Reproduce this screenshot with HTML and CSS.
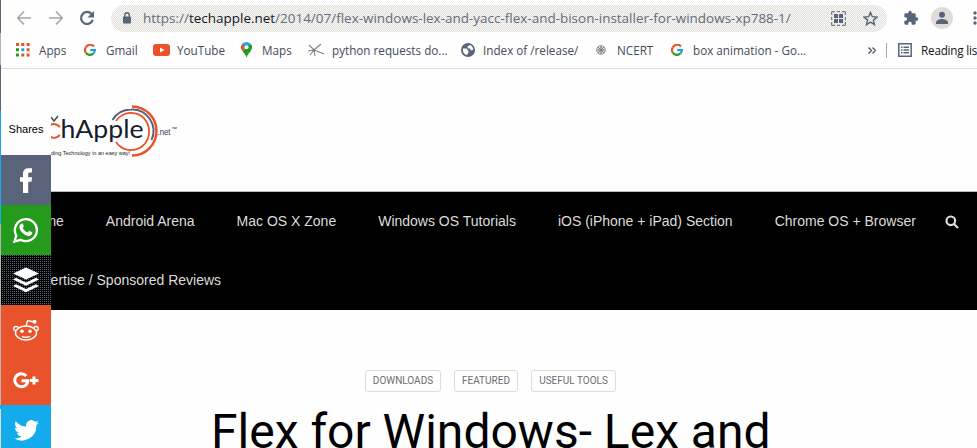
FILE: index.html
```html
<!DOCTYPE html>
<html lang="en">
<head>
<meta charset="utf-8">
<title>Flex for Windows</title>
<link rel="stylesheet" href="styles.css">
</head>
<body>
<div class="browser">
  <div class="toolbar">
    <svg class="back" width="16" height="16" viewBox="0 0 16 16" fill="none" stroke="#aaa6a2" stroke-width="1.6"><path d="M15 8H2M8 1.500 1.800 8 8 14.500"/></svg>
    <svg class="forward" width="16" height="16" viewBox="0 0 16 16" fill="none" stroke="#aaa6a2" stroke-width="1.6"><path d="M1 8h13M8 1.500 14.200 8 8 14.500"/></svg>
    <svg class="reload" width="16" height="16" viewBox="0 0 16 16"><path d="M12.600 4A6 6 0 1 0 13.800 9.800" fill="none" stroke="#59637a" stroke-width="2.200"/><path d="M15 1v6.500H8.500z" fill="#59637a"/></svg>
    <div class="address">
      <svg class="lock" width="10" height="12" viewBox="0 0 10 12"><rect x="1" y="4.500" width="8" height="7" rx=".8" fill="#59637a"/><path d="M2.800 5V3a2.200 2.200 0 0 1 4.400 0v2" fill="none" stroke="#59637a" stroke-width="1.400"/></svg>
      <span class="url">https://<b>techapple.net</b>/2014/07/flex-windows-lex-and-yacc-flex-and-bison-installer-for-windows-xp788-1/</span>
      <svg class="qr" width="15" height="15" viewBox="0 0 15 15" fill="#59637a"><path d="M3 3h4v4H3zM8 3h4v4H8zM3 8h4v4H3zM8 8h4v4H8z"/><path d="M.7 4V.7H4M11 .7h3.300V4M.7 11v3.300H4M11 14.300h3.300V11M6 .7h3M6 14.300h3M.7 6v3M14.300 6v3" fill="none" stroke="#59637a" stroke-width="1"/></svg>
      <svg class="star" width="15" height="15" viewBox="0 0 15 15" fill="none" stroke="#59637a" stroke-width="1.400"><path d="m7.500 1.400 1.800 4.300 4.700.4-3.600 3 1.100 4.600-4-2.500-4 2.500 1.100-4.600L1 6.100l4.700-.4z"/></svg>
    </div>
    <svg class="puzzle" width="16" height="16" viewBox="0 0 24 24" fill="#59637a"><path d="M20.500 11H19V7c0-1.100-.9-2-2-2h-4V3.500a2.500 2.500 0 0 0-5 0V5H4c-1.100 0-2 .9-2 2v3.800h1.500a2.700 2.700 0 0 1 0 5.400H2V20c0 1.100.9 2 2 2h3.800v-1.500a2.700 2.700 0 0 1 5.400 0V22H17c1.100 0 2-.9 2-2v-4h1.500a2.500 2.500 0 0 0 0-5z"/></svg>
    <svg class="avatar" width="22" height="22" viewBox="0 0 22 22"><circle cx="11" cy="11" r="11" fill="#deddd8"/><g fill="#59637a"><circle cx="11" cy="7.800" r="3"/><path d="M5 17v-1.500c0-2.300 3.500-3.600 6-3.600s6 1.300 6 3.600V17z"/></g></svg>
    <svg class="more" width="4" height="14" viewBox="0 0 4 14" fill="#59637a"><circle cx="2" cy="2" r="1.700"/><circle cx="2" cy="7" r="1.700"/><circle cx="2" cy="12" r="1.700"/></svg>
  </div>
  <div class="bookmarks">
    <div class="bm apps"><svg width="14" height="14" viewBox="0 0 14 14"><path d="M0 0h3v3H0zM5.300 0h3v3h-3zM10.600 0h3v3h-3zM10.600 5.300h3v3h-3zM5.300 10.600h3v3h-3z" fill="#e9532b"/><path d="M0 5.300h3v3H0zM0 10.600h3v3H0z" fill="#249b1c"/><path d="M5.300 5.300h3v3h-3z" fill="#13abec"/><path d="M10.600 10.600h3v3h-3z" fill="#e9532b"/></svg><span>Apps</span></div>
    <div class="bm gmail"><svg width="12" height="12" viewBox="0 0 12 12" fill="none" stroke-width="2.200"><path d="M10 2.500A5 5 0 0 0 1.700 3.500" stroke="#e9532b"/><path d="M1.700 3.500a5 5 0 0 0 0 5" stroke="#e9532b"/><path d="M1.700 8.500a5 5 0 0 0 7.700 1" stroke="#249b1c"/><path d="M9.400 9.500A5 5 0 0 0 10.900 6H6.200" stroke="#1b9dde"/></svg><span>Gmail</span></div>
    <div class="bm youtube"><svg width="17" height="12" viewBox="0 0 17 12"><rect width="17" height="12" rx="3" fill="#e9532b"/><path d="m7 3.500 4.500 2.500L7 8.500z" fill="#fff"/></svg><span>YouTube</span></div>
    <div class="bm maps"><svg width="11" height="16" viewBox="0 0 11 16"><path d="M5.500 0A5.500 5.500 0 0 0 0 5.500h11A5.500 5.500 0 0 0 5.500 0" fill="#13abec"/><path d="M1.500 2A5.400 5.400 0 0 0 1.400 9L5 5.500z" fill="#e9532b"/><path d="M1.400 9 9.700 2c1.700 2 1.700 4.700 0 7C8 11.500 6.500 12.500 5.500 15.500 4.500 12.500 3 11 1.400 9" fill="#249b1c"/><circle cx="5.500" cy="5.300" r="2" fill="#fff"/></svg><span>Maps</span></div>
    <div class="bm python"><svg width="17" height="14" viewBox="0 0 17 14" fill="none" stroke="#817f7e" stroke-width="1.100"><path d="m1 2 5 5 7-6M0 8l6-1-4 5M6 7l1 6M6 7l10 4"/><circle cx="6" cy="7" r="1" fill="#4c8a49" stroke="none"/></svg><span>python requests do...</span></div>
    <div class="bm index"><svg width="14" height="14" viewBox="0 0 14 14"><circle cx="7" cy="7" r="7" fill="#59637a"/><path d="M2 5.500h3.500L7.500 8v1.500L6 12C3 11.500 1.500 8.500 2 5.500M6.500 3.500 9 2c2 .8 3 2.500 3.300 4.500L10 7.500 9 5.500H7z" fill="#fff"/></svg><span>Index of /release/</span></div>
    <div class="bm ncert"><svg width="10" height="10" viewBox="0 0 10 10" fill="none" stroke="#777983" stroke-width=".9"><circle cx="5" cy="5" r="4.300"/><circle cx="5" cy="5" r="2.300"/><path d="M5 1v8M1 5h8M2 2l6 6M8 2 2 8"/></svg><span>NCERT</span></div>
    <div class="bm box"><svg width="12" height="12" viewBox="0 0 12 12" fill="none" stroke-width="2.200"><path d="M10 2.500A5 5 0 0 0 1.700 3.500" stroke="#e9532b"/><path d="M1.700 3.500a5 5 0 0 0 0 5" stroke="#e9532b"/><path d="M1.700 8.500a5 5 0 0 0 7.700 1" stroke="#249b1c"/><path d="M9.400 9.500A5 5 0 0 0 10.900 6H6.200" stroke="#1b9dde"/></svg><span>box animation - Go...</span></div>
    <svg class="chevrons" width="8" height="7" viewBox="0 0 8 7" fill="none" stroke="#59637a" stroke-width="1.500"><path d="m.5.500 3 3-3 3M4.500.500l3 3-3 3"/></svg>
    <div class="reading"><svg width="14" height="14" viewBox="0 0 14 14" fill="none" stroke="#59637a" stroke-width="1.500"><path d="M.8.800h12.400v12.400H.8zM3 4.200h1.500M5.500 4.200H11M3 7h1.500M5.500 7H11M3 9.800h1.500M5.500 9.800H11"/></svg><span>Reading list</span></div>
  </div>
</div>
<header class="site-header">
  <svg class="logo" width="180" height="64" viewBox="0 0 180 64">
    <g fill="none" stroke-width="2">
      <path d="M132 6.500a24.500 24.500 0 0 1 0 49" stroke="#e9532b" stroke-width="2.500"/>
      <path d="M112.500 20A21.500 21.500 0 0 1 131 9.500 21.500 21.500 0 0 1 151.500 40" stroke="#59637a"/>
      <path d="M116 21A18 18 0 0 1 149 31 18 18 0 0 1 116 42" stroke="#e9532b" stroke-width="1.800"/>
      <path d="M60 27c-4-4-9-4-12 0M48 34c3 5 8 5 12 1" stroke="#e9532b"/>
      <path d="m51 17 3 4 4-5" stroke="#43504d" stroke-width="1.500"/>
    </g>
    <text class="logo-name" x="60.500" y="38" textLength="83" lengthAdjust="spacingAndGlyphs">hApple</text>
    <text class="logo-net" x="157.500" y="35" textLength="13" lengthAdjust="spacingAndGlyphs">.net</text>
    <text class="logo-tm" x="171" y="31">™</text>
    <text class="logo-tag" x="51" y="55" textLength="79" lengthAdjust="spacingAndGlyphs">ding Technology in an easy way!</text>
  </svg>
</header>
<nav class="menu">
  <a>Home</a><a>Android Arena</a><a>Mac OS X Zone</a><a>Windows OS Tutorials</a><a>iOS (iPhone + iPad) Section</a><a>Chrome OS + Browser</a>
  <svg class="search" width="14" height="14" viewBox="0 0 14 14" fill="none" stroke="#e0deda" stroke-width="2.200"><circle cx="5.800" cy="5.800" r="4.300"/><path d="m9 9 4 4"/></svg>
  <a class="second">Advertise / Sponsored Reviews</a>
</nav>
<main class="article">
  <div class="tags"><span class="t1">DOWNLOADS</span><span class="t2">FEATURED</span><span class="t3">USEFUL TOOLS</span></div>
  <h1>Flex for Windows- Lex and</h1>
</main>
<aside class="share">
  <div class="shares">Shares</div>
  <div class="tile facebook"><svg width="12" height="25" viewBox="0 0 12 25" fill="#fff"><path d="M3 25V13.700H0V9.300h3V6.200C3 2 5 .300 8.200.300H12v4.300H9.900c-1.400 0-1.700.7-1.700 2v2.700H12l-.5 4.400H8.200V25z"/></svg></div>
  <div class="tile whatsapp"><svg width="26" height="26" viewBox="0 0 26 26"><path d="M1.500 24.500 3.300 18.500A11 11 0 1 1 7.700 22.800z" fill="none" stroke="#fff" stroke-width="2.300"/><path d="M9 6.500c.8-.1 1 .4 1.700 2.300.3.900-.8 1.700-1 2.200 1 2.200 2.800 3.700 5 4.500.6-.4 1.200-1.700 1.900-1.500l2.600 1.300c.5.600-.4 3.200-2.800 3.700-4 .4-9.400-4.500-10-8.500-.3-2 1.200-3.900 2.600-4" fill="#fff"/></svg></div>
  <div class="tile buffer"><svg width="26" height="26" viewBox="0 0 26 26" fill="#fff"><path d="m13 .500 13 6-13 6-13-6zM3 10.700l10 4.700 10-4.700 3 1.700-13 6.300-13-6.300zM3 17.200l10 4.700 10-4.700 3 1.700-13 6.300-13-6.300z"/></svg></div>
  <div class="tile reddit"><svg width="26" height="22" viewBox="0 0 26 22" fill="none" stroke="#fff" stroke-width="1.400"><ellipse cx="13" cy="14" rx="10.500" ry="7"/><path d="M13 7 14.500 1.500 20 2.800M3 11.500C0 12 0 8 2.500 7.500c1.500-.3 2.500.5 3 1M23 11.500c3 .5 3-3.500.5-4-1.500-.3-2.500.5-3 1M9 17.300c2 1.300 6 1.300 8 0"/><g fill="#fff" stroke="none"><circle cx="9" cy="12.300" r="1.800"/><circle cx="17" cy="12.300" r="1.800"/><circle cx="21.500" cy="2.800" r="2"/></g></svg></div>
  <div class="tile google"><svg width="26" height="17" viewBox="0 0 26 17" fill="none" stroke="#fff" stroke-width="3"><path d="M13.200 4A6.500 6.500 0 1 0 14.800 8.800H8.500M21 4.500v8M17 8.500h8.500"/></svg></div>
  <div class="tile twitter"><svg width="25" height="21" viewBox="0 0 24 20" fill="#fff"><path d="M24 2.400a10 10 0 0 1-2.800.8A5 5 0 0 0 23.300.500a10 10 0 0 1-3.100 1.200 4.900 4.900 0 0 0-8.400 4.500A14 14 0 0 1 1.700 1a4.900 4.900 0 0 0 1.500 6.600A5 5 0 0 1 1 7v.1A4.900 4.900 0 0 0 4.900 12a5 5 0 0 1-2.200.1 4.900 4.900 0 0 0 4.600 3.400A10 10 0 0 1 0 17.500 14 14 0 0 0 21.500 5z"/></svg></div>
</aside>
<div class="window-edge"></div>
</body>
</html>
```

FILE: styles.css
```css
* { box-sizing: border-box; }
html, body { height: 100%; }
body { margin: 0; overflow: hidden; position: relative; width: 977px; height: 448px; background: #fefefe; font-family: "Liberation Sans", Arial, sans-serif; }
svg { display: block; flex: none; }

.browser { height: 69px; border-bottom: 1px solid #dddcd7; font-family: "Open Sans", "Noto Sans", sans-serif; color: #454b59; }
.toolbar { display: flex; align-items: center; height: 36px; padding-left: 16px; }
.forward { margin-left: 16px; }
.reload { margin-left: 15px; }
.address { display: flex; align-items: center; width: 777px; height: 27px; margin-left: 16px; padding-left: 11px; border-radius: 14px; background: conic-gradient(#deddd8 25%, #fbfbfa 0 50%, #deddd8 0 75%, #fbfbfa 0) 0 0 / 2px 2px; }
.url { width: 652px; margin-left: 11px; font-size: 13.48px; line-height: 20px; white-space: nowrap; color: #646b7c; }
.url b { font-weight: 400; color: #15171c; }
.qr { margin-left: 36px; }
.star { margin-left: 17px; }
.puzzle { margin-left: 16px; }
.avatar { margin-left: 12px; }
.more { margin-left: 20px; }

.bookmarks { display: flex; align-items: center; height: 28px; padding-left: 16px; font-size: 11.7px; white-space: nowrap; }
.bm { display: flex; align-items: center; flex: none; }
.bm span, .reading span { margin-top: -1px; }
.apps { width: 68px; gap: 9px; }
.gmail { width: 69px; gap: 10px; }
.youtube { width: 88px; gap: 7px; }
.maps { width: 67px; gap: 10px; }
.python { width: 153px; gap: 7px; }
.index { width: 135px; gap: 8px; }
.ncert { width: 75px; gap: 11px; }
.box { width: 197px; gap: 10px; }
.reading { display: flex; flex: none; align-items: center; gap: 9px; height: 15px; margin-left: 10px; padding-left: 11px; border-left: 1px solid #aaa6a2; color: #15171c; letter-spacing: -.2px; }

.site-header { height: 122px; padding-top: 31px; }
.logo-name { font: 25.5px Lato, sans-serif; fill: #161c2b; }
.logo-net { font: 9px "Liberation Sans", sans-serif; fill: #333b50; }
.logo-tm { font: 6px "Liberation Sans", sans-serif; fill: #333b50; }
.logo-tag { font: 6px "Liberation Sans", sans-serif; fill: #222; }

.menu { display: flex; flex-wrap: wrap; align-content: flex-start; align-items: center; height: 119px; padding-left: 5.5px; border-top: 1px solid #bbb; background: #000; color: #dedcda; font-size: 14px; line-height: 59px; }
.menu a { padding: 0 21px; white-space: nowrap; }
.search { margin-left: 8px; }
.menu .second { flex: 0 0 100%; }

.article { padding-top: 60px; }
.tags { display: flex; gap: 13px; padding-left: 365px; }
.tags span { height: 22px; border: 1px solid #dddcd7; border-radius: 3px; font: 10px/20px Roboto, sans-serif; color: #6e6b70; text-align: center; white-space: nowrap; }
.t1 { width: 76px; }
.t2 { width: 64px; }
.t3 { width: 85px; }
h1 { margin: 11px 0 0 211px; font: 400 48px/58px Roboto, sans-serif; color: #000; white-space: nowrap; }

.share { position: absolute; left: 1px; top: 104px; width: 50px; }
.shares { height: 51px; background: #fefefe; font-size: 11px; line-height: 51px; text-align: center; color: #000; }
.tile { display: flex; align-items: center; justify-content: center; height: 50px; }
.facebook { background: #59637a; }
.whatsapp { background: #249b1c; }
.buffer { background: conic-gradient(#59637a 25%, #000 0) 0 0 / 2px 2px; }
.reddit, .google { background: #e9532b; }
.twitter { background: #13abec; }
.window-edge { position: absolute; left: 0; top: 0; width: 1px; height: 448px; background: linear-gradient(#59637a 33px, #b8b5b1 33px 65px, #59637a 65px 111px, #13abec 111px 224px, #b8b5b1 224px 405px, #13abec 405px 409px, #ddd 409px); }
```
